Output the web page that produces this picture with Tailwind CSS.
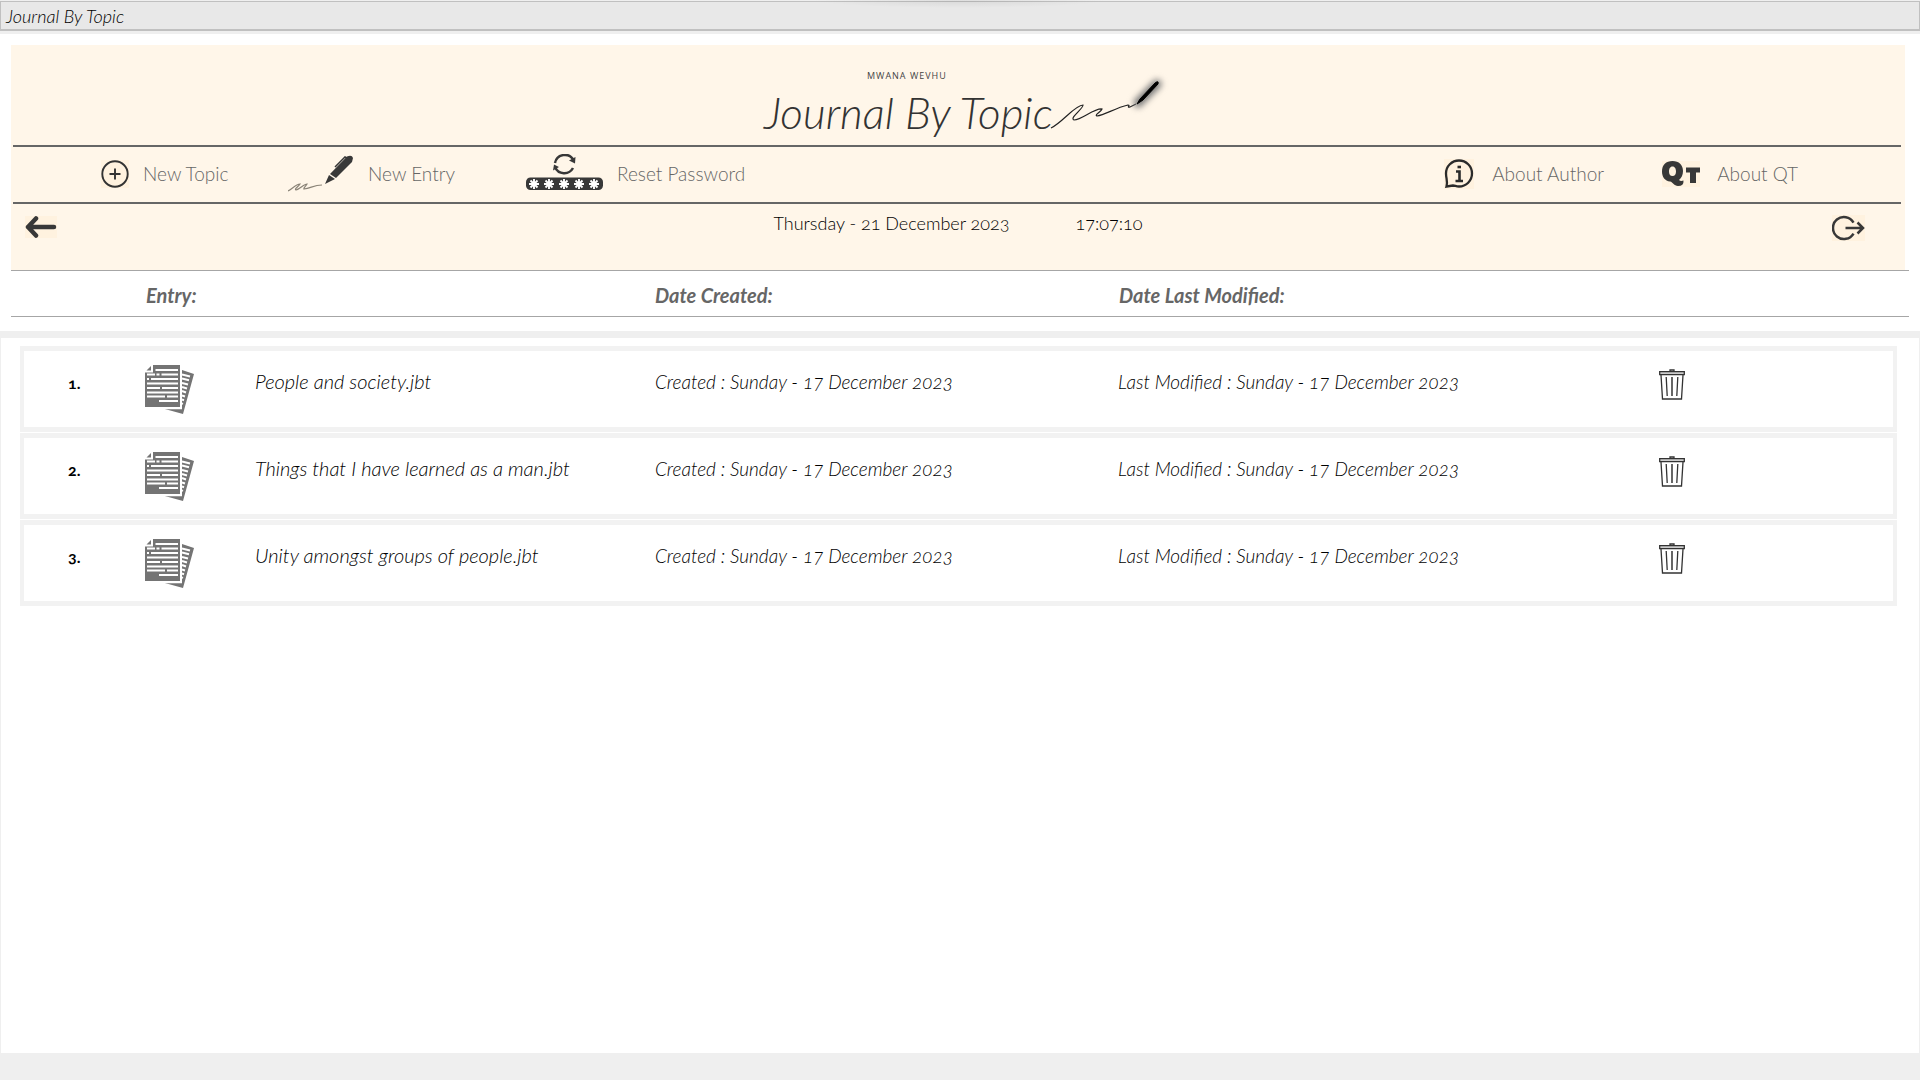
<!DOCTYPE html>
<html lang="en">
<head>
<meta charset="utf-8">
<title>Journal By Topic</title>
<script src="https://cdn.jsdelivr.net/npm/@tailwindcss/browser@4"></script>
</head>
<body class="flex min-h-screen flex-col bg-[#efefef] font-['Lato',sans-serif] font-light oldstyle-nums text-black">

<svg class="hidden" aria-hidden="true">
  <symbol id="pages" viewBox="0 0 49 49">
    <path d="M37 5l12 4-11 40-20-5.500h19z" fill="#747474"/>
    <path d="M37 9.500l8 2M37 13.500l7 1.700M37 18l6 1.500M37 22l5 1.500M37 26l4 1.500M37 30.500l3 1M37 34.500l2 .7M37 38.500l1 .4" stroke="#fff" stroke-width="2"/>
    <path d="M8 0h27v42H0V7.500h8z" fill="#747474"/>
    <path d="M1.500 5.500L6 1v4.500z" fill="#747474"/>
    <path d="M36 0v43.300H18" fill="none" stroke="#fff" stroke-width="2"/>
    <path d="M10.500 5H33M2 9.500h8M11.500 9.500h3M16.500 9.500H33M2 14h2M6 14h27M2 18.500h31M2 23h13M17 23h16M2 27.500h31M2 31.500h18M22 31.500h11M14 36h19" stroke="#fff" stroke-width="1.800"/>
  </symbol>
  <symbol id="trash" viewBox="0 0 26 31">
    <path d="M11 2.500V1h4v1.500" fill="none" stroke="#333" stroke-width="1.300"/>
    <path d="M.7 2.700h24.600v3H.7z" fill="#ccc" stroke="#333" stroke-width="1.300"/>
    <path d="M2 6l1.500 24h19L24 6" fill="none" stroke="#333" stroke-width="1.300"/>
    <path d="M7.200 8l1 19M18.800 8l-1 19" stroke="#333" stroke-width="1.300"/><path d="M13 8v19" stroke="#555" stroke-width="1.800"/>
  </symbol>
  <symbol id="star" viewBox="-5 -5 10 10">
    <path d="M0-5V5M-5 0H5M-3.500-3.500l7 7M-3.500 3.500l7-7" stroke="#fff" stroke-width="1.900"/>
  </symbol>
</svg>

<div class="relative mt-px border border-b-2 border-[#c0c0c0] bg-[#e8e8e8] pt-0.5 pl-[5px] text-lg leading-[25px] italic">
  Journal By Topic
  <div class="absolute -top-0.5 left-1/2 h-2 w-75 -translate-x-1/2 bg-[radial-gradient(ellipse_at_top,rgb(0_0_0/0.07),transparent_70%)]"></div>
</div>

<main class="mt-[3px] flex grow flex-col">
  <div class="bg-white px-[11px] pt-[11px] pb-[14px]">
    <header class="mr-1 bg-[#fff6e9]">
      <div class="flex h-25 items-start justify-center">
        <svg class="mt-6 h-[76px] w-[420px] overflow-visible" viewBox="0 0 420 76" role="img" aria-label="Mwana Wevhu Journal By Topic">
          <text x="119" y="10" font-family="Open Sans" font-size="9" font-weight="400" letter-spacing="1" fill="#444">MWANA WEVHU</text>
          <text x="16" y="60" font-size="44" font-weight="300" font-style="italic" fill="#333">Journal By Topic</text>
          <path d="M303 59c12-6 24-23 32-23 1 3-14 13-9 15 8 0 20-12 28-11-1 3-8 6-5 7 8-1 18-8 31-11 3 0-2 3 2 2l6-3" fill="none" stroke="#222" stroke-width="1.200"/>
          <path class="blur-[3px]" d="M390 34l19-19" stroke="#777" stroke-width="9" stroke-linecap="round"/>
          <path d="M389 35l3-5 15-16q4-3 3 1L395 31z" fill="#000" stroke="#000"/>
        </svg>
      </div>

      <nav class="mr-1 ml-0.5 flex h-[59px] items-start border-y-2 border-[#666] text-[19px] leading-[54px] text-[#666]">
        <button class="ml-[88px] flex w-[187px] items-center gap-[14px]">
          <svg class="size-7 shrink-0 bg-[#fff2df]" viewBox="0 0 28 28" fill="none" stroke="#333" stroke-width="1.900"><circle cx="14" cy="14" r="12.700"/><path d="M8.500 14h11M14 8.500v11"/></svg>
          New Topic
        </button>
        <button class="flex w-[238px] items-center gap-[14px]">
          <svg class="h-10 w-[66px] shrink-0" viewBox="0 0 66 40">
            <path d="M0 37c4-2 8-7 12-7-2 3-6 5-4 6 4-1 8-6 11-6-1 2-4 4-3 5 7-1 10-4 18-4" fill="none" stroke="#8a8377" stroke-width="1.200"/>
            <path d="M37 30l4-9 6 4zM42 20L59 2.500q5-2 6 1.500L64 8 48 24z" fill="#383838"/>
            <path d="M47 13L57 3l2 1" fill="none" stroke="#383838" stroke-width="1.500"/>
          </svg>
          New Entry
        </button>
        <button class="flex items-center gap-[14px]">
          <svg class="h-10 w-[77px] shrink-0" viewBox="0 3 77 40">
            <path d="M29 10a10 10 0 0 1 18.500-3M47 15a10 10 0 0 1-18-1" transform="translate(0 2)" fill="none" stroke="#383838" stroke-width="2.500"/>
            <path d="M43 9.500l6 3 .5-6.500zM33 16l-5-2.500-1 6z" fill="#383838"/>
            <rect y="26.500" width="77" height="12.500" rx="4.500" fill="#383838"/>
            <use href="#star" x="3" y="28" width="10" height="10"/><use href="#star" x="18" y="28" width="10" height="10"/><use href="#star" x="33" y="28" width="10" height="10"/><use href="#star" x="48" y="28" width="10" height="10"/><use href="#star" x="63" y="28" width="10" height="10"/>
          </svg>
          Reset Password
        </button>
        <button class="ml-auto flex w-[218px] items-center gap-[18px]">
          <svg class="size-[30px] shrink-0 bg-[#fff2df]" viewBox="0 0 30 30" fill="none" stroke="#2b2b2b"><path d="M2.500 27.500c1.500-5-.5-8-.5-13a13 13 0 1 1 13 13c-3 0-4-1-6-1z" stroke-width="2.300"/><path d="M12 12.500h3.500V21M11.500 22h7.500" stroke-width="2.600"/><path d="M13.500 8h3.500" stroke-width="2.600"/></svg>
          About Author
        </button>
        <button class="mr-[103px] flex items-center gap-[17px]">
          <svg class="h-[26px] w-[38px] shrink-0 bg-[#fff2df]" viewBox="0 0 38 26" fill="#383838"><path fill-rule="evenodd" d="M10.500 0C17 0 21 4 21 10c0 4-1.500 7-4 9 1.500 1.500 3 1 4.500.5q.5 5.500-5.500 5.500c-4 0-5-4-8-4.500C3 20 0 16 0 10.500 0 4 4 0 10.500 0zM10.500 5.500C8 5.500 7 8 7 10.500s1 4.500 3.500 4.500 3.500-2 3.500-4.500-1-5-3.500-5z"/><path d="M24 6.500h14v5h-4V22h-6V11.500h-4z"/></svg>
          About QT
        </button>
      </nav>

      <div class="grid h-[66px] grid-cols-[1fr_auto_1fr] items-start px-[14px] pt-[11px]">
        <button class="w-8 pt-px" aria-label="Back">
          <svg class="h-[22px] w-8 bg-[#fff2df]" viewBox="0 0 32 22" fill="none" stroke="#383838" stroke-width="4.500" stroke-linecap="round" stroke-linejoin="round"><path d="M29 11H3M11 2.500L3 11l8 8.500"/></svg>
        </button>
        <div class="flex gap-[66px] text-lg leading-4"><span>Thursday - 21 December 2023</span><time>17:07:10</time></div>
        <button class="mr-[26px] justify-self-end" aria-label="Log out">
          <svg class="h-[26px] w-[33px] bg-[#fff2df]" viewBox="0 0 33 26" fill="none" stroke="#383838" stroke-width="2.500"><path d="M21.500 7.500a11 11 0 1 0 0 11"/><path d="M13.500 13H31M25.500 7.500L31 13l-5.500 5.500"/></svg>
        </button>
      </div>
    </header>
  </div>

  <table class="-mt-[14px] flex grow flex-col text-left">
    <thead class="block border-b-7 border-[#efefef] bg-white px-[11px] pb-[14px]">
      <tr class="grid h-[47px] grid-cols-[135px_509fr_464fr_790fr] border-y border-[#a6a6a6] text-xl leading-12 text-[#666] italic">
        <td></td>
        <th class="font-bold">Entry:</th>
        <th class="font-bold">Date Created:</th>
        <th class="font-bold">Date Last Modified:</th>
      </tr>
    </thead>
    <tbody class="mx-px mb-[27px] flex grow flex-col gap-px bg-white pt-2 pr-[22px] pl-[19px] text-[19px] leading-6 italic">
      <tr class="grid h-[86px] grid-cols-[44px_77px_110px_400fr_463fr_541fr_234fr] border-x-4 border-y-5 border-[#f2f2f2]">
        <td></td>
        <td class="pt-5 text-base leading-6 font-bold not-italic">1.</td>
        <td class="pt-[14px]"><svg class="size-[49px]" aria-hidden="true"><use href="#pages"/></svg></td>
        <td class="pt-[18px] text-xl leading-6">People and society.jbt</td>
        <td class="pt-[19px]">Created : Sunday - 17 December 2023</td>
        <td class="pt-[19px]">Last Modified : Sunday - 17 December 2023</td>
        <td class="pt-[18px]"><button class="block" aria-label="Delete"><svg class="h-[31px] w-[26px]"><use href="#trash"/></svg></button></td>
      </tr>
      <tr class="grid h-[86px] grid-cols-[44px_77px_110px_400fr_463fr_541fr_234fr] border-x-4 border-y-5 border-[#f2f2f2]">
        <td></td>
        <td class="pt-5 text-base leading-6 font-bold not-italic">2.</td>
        <td class="pt-[14px]"><svg class="size-[49px]" aria-hidden="true"><use href="#pages"/></svg></td>
        <td class="pt-[18px] text-xl leading-6">Things that I have learned as a man.jbt</td>
        <td class="pt-[19px]">Created : Sunday - 17 December 2023</td>
        <td class="pt-[19px]">Last Modified : Sunday - 17 December 2023</td>
        <td class="pt-[18px]"><button class="block" aria-label="Delete"><svg class="h-[31px] w-[26px]"><use href="#trash"/></svg></button></td>
      </tr>
      <tr class="grid h-[86px] grid-cols-[44px_77px_110px_400fr_463fr_541fr_234fr] border-x-4 border-y-5 border-[#f2f2f2]">
        <td></td>
        <td class="pt-5 text-base leading-6 font-bold not-italic">3.</td>
        <td class="pt-[14px]"><svg class="size-[49px]" aria-hidden="true"><use href="#pages"/></svg></td>
        <td class="pt-[18px] text-xl leading-6">Unity amongst groups of people.jbt</td>
        <td class="pt-[19px]">Created : Sunday - 17 December 2023</td>
        <td class="pt-[19px]">Last Modified : Sunday - 17 December 2023</td>
        <td class="pt-[18px]"><button class="block" aria-label="Delete"><svg class="h-[31px] w-[26px]"><use href="#trash"/></svg></button></td>
      </tr>
    </tbody>
  </table>
</main>
</body>
</html>
